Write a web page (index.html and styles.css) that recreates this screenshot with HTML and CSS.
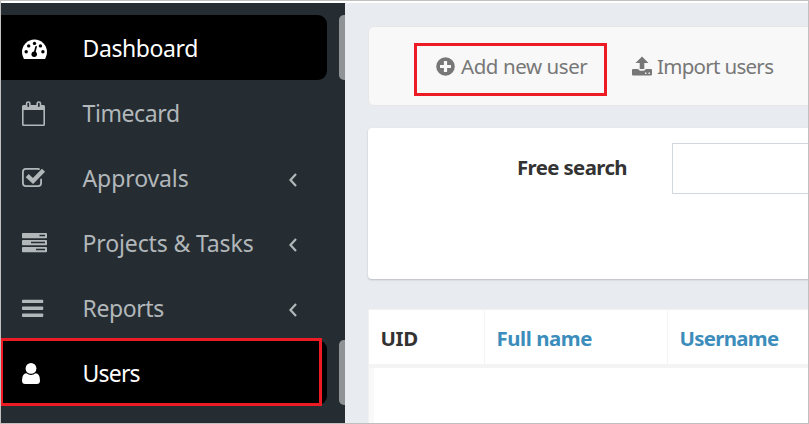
FILE: index.html
```html
<!DOCTYPE html>
<html lang="en">
<head>
<meta charset="utf-8">
<title>Users</title>
<link rel="stylesheet" href="styles.css">
</head>
<body>
<div class="app">
  <nav class="sidebar">
    <a class="item active">
      <svg class="icon" viewBox="0 0 28 65"><path fill="currentColor" d="M2 37a12.5 12.5 0 0 1 25 0q0 3.600-1.700 6.500q-.4.600-1.100.6H4.800q-.7 0-1.100-.6Q2 40.600 2 37z"/><g fill="#000"><circle cx="6.200" cy="36.700" r="1.700"/><circle cx="8.700" cy="30.900" r="1.700"/><circle cx="14.500" cy="28.400" r="1.700"/><circle cx="20.400" cy="30.900" r="1.700"/><circle cx="22.900" cy="36.700" r="1.700"/><circle cx="14.200" cy="39.300" r="2.700"/></g><path d="M14.300 38.500l1.800-6.600" stroke="#000" stroke-width="1.700" stroke-linecap="round"/></svg>
      <span class="label dashboard">Dashboard</span>
    </a>
    <a class="item">
      <svg class="icon" viewBox="0 0 28 65"><path fill="currentColor" fill-rule="evenodd" d="M3.500 25h20q1.500 0 1.500 1.500v18q0 1.500-1.500 1.500h-20Q2 46 2 44.500v-18Q2 25 3.500 25zM3.600 30v14.400h19.800V30z"/><g fill="#252d33" stroke="currentColor" stroke-width="1.600"><rect x="6.600" y="22" width="3.300" height="5.800" rx="1.600"/><rect x="17.200" y="22" width="3.300" height="5.800" rx="1.600"/></g></svg>
      <span class="label timecard">Timecard</span>
    </a>
    <a class="item">
      <svg class="icon" viewBox="0 0 28 65"><path fill="none" stroke="currentColor" stroke-width="1.800" stroke-linecap="round" d="M19 24.100Q18.500 23.900 18 23.900H6Q2.900 23.900 2.900 27v11Q2.900 41.100 6 41.100h12q3.100 0 3.100-3.100v-3.600"/><path fill="none" stroke="currentColor" stroke-width="4.400" d="M7.200 30.600l5.800 5.400L23.500 25.300"/></svg>
      <span class="label approvals">Approvals</span>
      <svg class="chevron" viewBox="0 0 10 16"><path d="M8 2L2.500 8L8 14"/></svg>
    </a>
    <a class="item">
      <svg class="icon" viewBox="0 0 28 65"><g fill="currentColor"><rect x="2" y="23" width="25" height="5.200" rx=".8"/><rect x="2" y="30" width="25" height="5.200" rx=".8"/><rect x="2" y="37" width="25" height="5.200" rx=".8"/></g><path stroke="#252d33" stroke-width="1.500" d="M19.500 25.600H25M11 32.600H25M16 39.600H25"/></svg>
      <span class="label projects">Projects &amp; Tasks</span>
      <svg class="chevron" viewBox="0 0 10 16"><path d="M8 2L2.500 8L8 14"/></svg>
    </a>
    <a class="item">
      <svg class="icon" viewBox="0 0 28 65"><g fill="currentColor"><rect x="2" y="24.700" width="21.200" height="3.400" rx=".7"/><rect x="2" y="31.600" width="21.200" height="3.400" rx=".7"/><rect x="2" y="38.500" width="21.200" height="3.400" rx=".7"/></g></svg>
      <span class="label reports">Reports</span>
      <svg class="chevron" viewBox="0 0 10 16"><path d="M8 2L2.500 8L8 14"/></svg>
    </a>
    <a class="item active">
      <svg class="icon" viewBox="0 0 28 65"><circle cx="11" cy="28.400" r="5.400" fill="currentColor"/><path fill="currentColor" d="M6.500 33.300Q8.500 35 11 35t4.500-1.700Q20 33.500 20 40.500Q20 44 16.800 44H5.200Q2 44 2 40.500Q2 33.500 6.500 33.300z"/></svg>
      <span class="label users">Users</span>
    </a>
  </nav>
  <main class="content">
    <div class="toolbar">
      <a class="action"><svg class="action-icon" viewBox="0 0 20 20"><circle cx="9.500" cy="10.500" r="9.300" fill="#777"/><path stroke="#f8f8f8" stroke-width="3.200" d="M9.500 5v11M4 10.500h11"/></svg><span class="action-text add">Add new user</span></a>
      <a class="action import-action"><svg class="action-icon" viewBox="0 -.6 20 20"><path fill="#777" d="M10 0l6.500 6.300H12.300V12.300H7.700V6.300H3.500zM1 12.500H6.200q.8 1.700 2.300 1.700h3q1.500 0 2.300-1.700H19q1 0 1 1v4.500q0 1-1 1H1q-1 0-1-1V13.500q0-1 1-1z"/><path fill="#f8f8f8" d="M13 16h1.400v1.400H13zM16.500 16h1.400v1.400h-1.400z"/></svg><span class="action-text import">Import users</span></a>
    </div>
    <section class="panel">
      <label class="field-label" for="search">Free search</label>
      <input class="field" id="search" type="text">
    </section>
    <section class="table">
      <div class="head">
        <div class="cell"><span class="uid">UID</span></div>
        <div class="cell"><span class="link fullname">Full name</span></div>
        <div class="cell"><span class="link username">Username</span></div>
      </div>
      <div class="body"></div>
    </section>
  </main>
  <div class="mark mark-add"></div>
  <div class="mark mark-users"></div>
  <div class="frame"></div>
</div>
</body>
</html>
```
FILE: styles.css
```css
* { box-sizing: border-box; }
body { margin: 0; background: #fff; font-family: "Noto Sans", "Open Sans", sans-serif; }
.app { position: relative; width: 809px; height: 424px; padding-top: 3px; display: flex; overflow: hidden; }
.sidebar { width: 345px; flex: none; background: #252d33; padding-top: 12px; }
.item { position: relative; display: flex; align-items: center; width: 327px; height: 65px; padding-left: 20px; color: #b2b7ba; border-radius: 0 9px 9px 0; }
.item.active { background: #000; color: #fff; }
.item.active::after { content: ""; position: absolute; left: 339px; top: 0; width: 6px; height: 65px; background: #8f9395; border-radius: 5px 0 0 5px; }
.icon { width: 28px; height: 65px; flex: none; }
.label { width: 205px; flex: none; margin-left: 34.5px; margin-right: .5px; padding-top: 1px; font-size: 23px; line-height: 32px; white-space: nowrap; }
.dashboard { letter-spacing: -.4px; }
.timecard { letter-spacing: -.4px; }
.approvals { letter-spacing: -.1px; }
.projects { letter-spacing: -.13px; }
.reports { letter-spacing: -.4px; }
.users { letter-spacing: -.8px; }
.chevron { width: 10px; height: 16px; flex: none; margin-top: 5px; fill: none; stroke: #b2b7ba; stroke-width: 2.200; }
.content { flex: 1; min-width: 0; background: #e8ebf0; padding: 23px 0 0 23px; }
.toolbar { height: 80px; width: 460px; border: 1px solid #e7e7e7; border-radius: 6px; background: #f8f8f8; display: flex; align-items: center; padding-left: 67px; }
.action { display: flex; flex: none; align-items: center; color: #777; font-size: 20.5px; line-height: 30px; white-space: nowrap; }
.action-icon { width: 20px; height: 20px; flex: none; margin-right: 5px; }
.action-text { width: 128px; }
.import-action { margin-left: 43px; }
.add { letter-spacing: -.42px; }
.import { letter-spacing: -.7px; }
.panel { height: 151px; width: 460px; margin-top: 22px; padding-top: 15px; background: #fff; border-radius: 4px; box-shadow: 0 1px 2px rgba(0,0,0,.2); display: flex; align-items: flex-start; }
.field-label { width: 259px; flex: none; margin-right: 45px; padding-top: 9px; text-align: right; font-size: 20.4px; line-height: 30px; font-weight: 700; color: #333; letter-spacing: -.6px; white-space: nowrap; }
.field { width: 170px; flex: none; height: 51px; border: 1px solid #d2d6de; background: #fff; padding: 0 12px; }
.table { height: 130px; width: 460px; margin-top: 30px; border: 1px solid #f1f1f2; background: #fff; display: flex; flex-direction: column; }
.head { display: flex; height: 58px; flex: none; border-bottom: 4px solid #f4f4f4; }
.cell { width: 183px; flex: none; border-right: 1px solid #f4f4f4; padding: 13px 0 0 11.5px; font-weight: 700; font-size: 20.4px; line-height: 30px; color: #333; white-space: nowrap; }
.cell:first-child { width: 116px; }
.link { color: #3c8dbc; }
.fullname { letter-spacing: -.45px; }
.username { letter-spacing: -.7px; }
.uid { letter-spacing: -.3px; }
.body { flex: 1; border-left: 5px solid #f9f9f9; }
.mark { position: absolute; border: 3px solid #ed1c24; }
.mark-add { left: 414px; top: 43px; width: 193px; height: 53px; }
.mark-users { left: 0; top: 338px; width: 322px; height: 68px; }
.frame { position: absolute; inset: 0; border: 1px solid #c0c0c0; }
```
